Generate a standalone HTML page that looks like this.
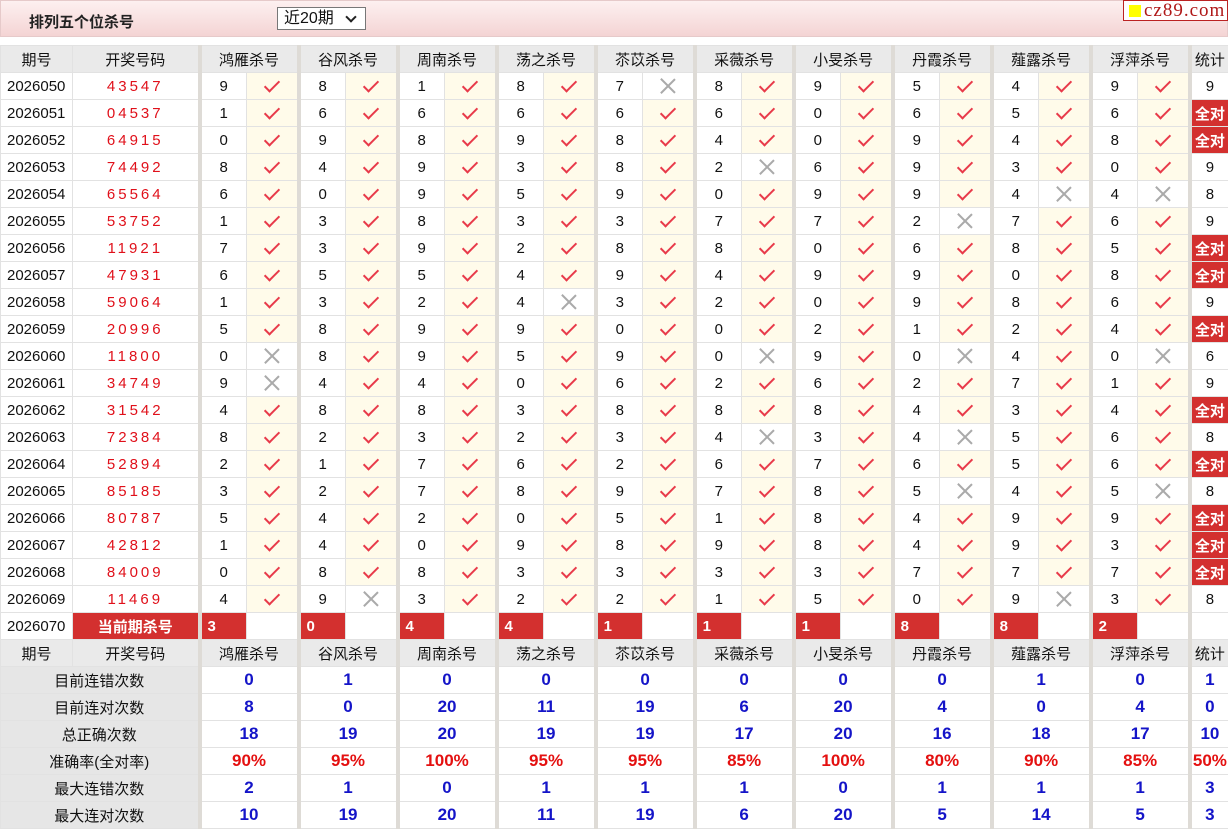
<!DOCTYPE html>
<html><head><meta charset="utf-8">
<style>
*{box-sizing:border-box;margin:0;padding:0}
body{width:1228px;height:828px;overflow:hidden;background:#fff;font-family:"Liberation Sans","Noto Sans CJK SC",sans-serif;position:relative}
.top{position:absolute;left:0;top:0;width:1228px;height:37px;background:linear-gradient(#fdf0f0,#f4d4d4);border:1px solid #e6caca}
.top b{position:absolute;left:28px;top:10px;font-size:15px;color:#222}
.sel{position:absolute;left:277px;top:7px;width:89px;height:23px;border:1px solid #777;background:#fff;font-size:16px;padding-left:6px;line-height:21px;color:#111}
.sel:after{content:"";position:absolute;right:10px;top:5px;width:6px;height:6px;border-right:2px solid #222;border-bottom:2px solid #222;transform:rotate(45deg)}
.logo{position:absolute;left:1123px;top:0;width:105px;height:21px;border:1px solid #b22;background:#fff;font-family:"Liberation Serif",serif;font-size:19px;color:#b01818;line-height:19px;padding-left:20px;letter-spacing:1px}
.logo:before{content:"";position:absolute;left:5px;top:4px;width:12px;height:12px;background:#ff0}
table{position:absolute;left:0;top:45px;border-collapse:collapse;table-layout:fixed;width:1228px}
td{height:27px;border:1px solid #e2e2e2;text-align:center;font-size:15px;color:#111;padding:0;position:relative;white-space:nowrap;overflow:hidden}
td.p{text-align:left;padding-left:6px}
td.h{color:#e0101a;letter-spacing:3px}
td.n{border-left:4px solid #dedbd6;text-align:left;padding-left:18px}
td.k{background:#fffbea}
td.s{border-left:4px solid #dedbd6}
tr.hd td{background:#eaeaea}
i.c{display:inline-block;width:8px;height:15px;border-right:2px solid #e83a4a;border-bottom:2px solid #e83a4a;transform:rotate(45deg);margin-top:-5px;vertical-align:middle}
i.x{display:inline-block;width:18px;height:18px;position:relative;vertical-align:middle}
i.x:before,i.x:after{content:"";position:absolute;left:8px;top:-1px;width:1.5px;height:20px;background:#aaa;transform:rotate(45deg)}
i.x:after{transform:rotate(-45deg)}
.q{background:#d3302f !important;color:#fff !important;font-weight:bold}
td.r{color:#fff;font-weight:bold;background:#d3302f;text-align:left;padding-left:6px}
tr.cur td.n{padding-left:6px}
td.l{background:#e6e6e6}
td.b{color:#1414c8;font-weight:bold;font-size:17px}
td.e{color:#e41010;font-weight:bold;font-size:17px}
</style></head><body>
<div class="top"><b>排列五个位杀号</b></div>
<div class="sel">近20期</div>
<div class="logo">cz89.com</div>
<table>
<colgroup><col style="width:72px"><col style="width:127px">
<col style="width:47px"><col style="width:52px"><col style="width:47px"><col style="width:52px"><col style="width:47px"><col style="width:52px"><col style="width:47px"><col style="width:52px"><col style="width:47px"><col style="width:52px"><col style="width:47px"><col style="width:52px"><col style="width:47px"><col style="width:52px"><col style="width:47px"><col style="width:52px"><col style="width:47px"><col style="width:52px"><col style="width:47px"><col style="width:52px">
<col style="width:39px"></colgroup>
<tr class="hd"><td>期号</td><td>开奖号码</td><td colspan=2 class="s">鸿雁杀号</td><td colspan=2 class="s">谷风杀号</td><td colspan=2 class="s">周南杀号</td><td colspan=2 class="s">荡之杀号</td><td colspan=2 class="s">苶苡杀号</td><td colspan=2 class="s">采薇杀号</td><td colspan=2 class="s">小旻杀号</td><td colspan=2 class="s">丹霞杀号</td><td colspan=2 class="s">薤露杀号</td><td colspan=2 class="s">浮萍杀号</td><td class="s">统计</td></tr>
<tr><td class=p>2026050</td><td class=h>43547</td><td class=n>9</td><td class=k><i class=c></i></td><td class=n>8</td><td class=k><i class=c></i></td><td class=n>1</td><td class=k><i class=c></i></td><td class=n>8</td><td class=k><i class=c></i></td><td class=n>7</td><td><i class=x></i></td><td class=n>8</td><td class=k><i class=c></i></td><td class=n>9</td><td class=k><i class=c></i></td><td class=n>5</td><td class=k><i class=c></i></td><td class=n>4</td><td class=k><i class=c></i></td><td class=n>9</td><td class=k><i class=c></i></td><td class=s>9</td></tr>
<tr><td class=p>2026051</td><td class=h>04537</td><td class=n>1</td><td class=k><i class=c></i></td><td class=n>6</td><td class=k><i class=c></i></td><td class=n>6</td><td class=k><i class=c></i></td><td class=n>6</td><td class=k><i class=c></i></td><td class=n>6</td><td class=k><i class=c></i></td><td class=n>6</td><td class=k><i class=c></i></td><td class=n>0</td><td class=k><i class=c></i></td><td class=n>6</td><td class=k><i class=c></i></td><td class=n>5</td><td class=k><i class=c></i></td><td class=n>6</td><td class=k><i class=c></i></td><td class="s q">全对</td></tr>
<tr><td class=p>2026052</td><td class=h>64915</td><td class=n>0</td><td class=k><i class=c></i></td><td class=n>9</td><td class=k><i class=c></i></td><td class=n>8</td><td class=k><i class=c></i></td><td class=n>9</td><td class=k><i class=c></i></td><td class=n>8</td><td class=k><i class=c></i></td><td class=n>4</td><td class=k><i class=c></i></td><td class=n>0</td><td class=k><i class=c></i></td><td class=n>9</td><td class=k><i class=c></i></td><td class=n>4</td><td class=k><i class=c></i></td><td class=n>8</td><td class=k><i class=c></i></td><td class="s q">全对</td></tr>
<tr><td class=p>2026053</td><td class=h>74492</td><td class=n>8</td><td class=k><i class=c></i></td><td class=n>4</td><td class=k><i class=c></i></td><td class=n>9</td><td class=k><i class=c></i></td><td class=n>3</td><td class=k><i class=c></i></td><td class=n>8</td><td class=k><i class=c></i></td><td class=n>2</td><td><i class=x></i></td><td class=n>6</td><td class=k><i class=c></i></td><td class=n>9</td><td class=k><i class=c></i></td><td class=n>3</td><td class=k><i class=c></i></td><td class=n>0</td><td class=k><i class=c></i></td><td class=s>9</td></tr>
<tr><td class=p>2026054</td><td class=h>65564</td><td class=n>6</td><td class=k><i class=c></i></td><td class=n>0</td><td class=k><i class=c></i></td><td class=n>9</td><td class=k><i class=c></i></td><td class=n>5</td><td class=k><i class=c></i></td><td class=n>9</td><td class=k><i class=c></i></td><td class=n>0</td><td class=k><i class=c></i></td><td class=n>9</td><td class=k><i class=c></i></td><td class=n>9</td><td class=k><i class=c></i></td><td class=n>4</td><td><i class=x></i></td><td class=n>4</td><td><i class=x></i></td><td class=s>8</td></tr>
<tr><td class=p>2026055</td><td class=h>53752</td><td class=n>1</td><td class=k><i class=c></i></td><td class=n>3</td><td class=k><i class=c></i></td><td class=n>8</td><td class=k><i class=c></i></td><td class=n>3</td><td class=k><i class=c></i></td><td class=n>3</td><td class=k><i class=c></i></td><td class=n>7</td><td class=k><i class=c></i></td><td class=n>7</td><td class=k><i class=c></i></td><td class=n>2</td><td><i class=x></i></td><td class=n>7</td><td class=k><i class=c></i></td><td class=n>6</td><td class=k><i class=c></i></td><td class=s>9</td></tr>
<tr><td class=p>2026056</td><td class=h>11921</td><td class=n>7</td><td class=k><i class=c></i></td><td class=n>3</td><td class=k><i class=c></i></td><td class=n>9</td><td class=k><i class=c></i></td><td class=n>2</td><td class=k><i class=c></i></td><td class=n>8</td><td class=k><i class=c></i></td><td class=n>8</td><td class=k><i class=c></i></td><td class=n>0</td><td class=k><i class=c></i></td><td class=n>6</td><td class=k><i class=c></i></td><td class=n>8</td><td class=k><i class=c></i></td><td class=n>5</td><td class=k><i class=c></i></td><td class="s q">全对</td></tr>
<tr><td class=p>2026057</td><td class=h>47931</td><td class=n>6</td><td class=k><i class=c></i></td><td class=n>5</td><td class=k><i class=c></i></td><td class=n>5</td><td class=k><i class=c></i></td><td class=n>4</td><td class=k><i class=c></i></td><td class=n>9</td><td class=k><i class=c></i></td><td class=n>4</td><td class=k><i class=c></i></td><td class=n>9</td><td class=k><i class=c></i></td><td class=n>9</td><td class=k><i class=c></i></td><td class=n>0</td><td class=k><i class=c></i></td><td class=n>8</td><td class=k><i class=c></i></td><td class="s q">全对</td></tr>
<tr><td class=p>2026058</td><td class=h>59064</td><td class=n>1</td><td class=k><i class=c></i></td><td class=n>3</td><td class=k><i class=c></i></td><td class=n>2</td><td class=k><i class=c></i></td><td class=n>4</td><td><i class=x></i></td><td class=n>3</td><td class=k><i class=c></i></td><td class=n>2</td><td class=k><i class=c></i></td><td class=n>0</td><td class=k><i class=c></i></td><td class=n>9</td><td class=k><i class=c></i></td><td class=n>8</td><td class=k><i class=c></i></td><td class=n>6</td><td class=k><i class=c></i></td><td class=s>9</td></tr>
<tr><td class=p>2026059</td><td class=h>20996</td><td class=n>5</td><td class=k><i class=c></i></td><td class=n>8</td><td class=k><i class=c></i></td><td class=n>9</td><td class=k><i class=c></i></td><td class=n>9</td><td class=k><i class=c></i></td><td class=n>0</td><td class=k><i class=c></i></td><td class=n>0</td><td class=k><i class=c></i></td><td class=n>2</td><td class=k><i class=c></i></td><td class=n>1</td><td class=k><i class=c></i></td><td class=n>2</td><td class=k><i class=c></i></td><td class=n>4</td><td class=k><i class=c></i></td><td class="s q">全对</td></tr>
<tr><td class=p>2026060</td><td class=h>11800</td><td class=n>0</td><td><i class=x></i></td><td class=n>8</td><td class=k><i class=c></i></td><td class=n>9</td><td class=k><i class=c></i></td><td class=n>5</td><td class=k><i class=c></i></td><td class=n>9</td><td class=k><i class=c></i></td><td class=n>0</td><td><i class=x></i></td><td class=n>9</td><td class=k><i class=c></i></td><td class=n>0</td><td><i class=x></i></td><td class=n>4</td><td class=k><i class=c></i></td><td class=n>0</td><td><i class=x></i></td><td class=s>6</td></tr>
<tr><td class=p>2026061</td><td class=h>34749</td><td class=n>9</td><td><i class=x></i></td><td class=n>4</td><td class=k><i class=c></i></td><td class=n>4</td><td class=k><i class=c></i></td><td class=n>0</td><td class=k><i class=c></i></td><td class=n>6</td><td class=k><i class=c></i></td><td class=n>2</td><td class=k><i class=c></i></td><td class=n>6</td><td class=k><i class=c></i></td><td class=n>2</td><td class=k><i class=c></i></td><td class=n>7</td><td class=k><i class=c></i></td><td class=n>1</td><td class=k><i class=c></i></td><td class=s>9</td></tr>
<tr><td class=p>2026062</td><td class=h>31542</td><td class=n>4</td><td class=k><i class=c></i></td><td class=n>8</td><td class=k><i class=c></i></td><td class=n>8</td><td class=k><i class=c></i></td><td class=n>3</td><td class=k><i class=c></i></td><td class=n>8</td><td class=k><i class=c></i></td><td class=n>8</td><td class=k><i class=c></i></td><td class=n>8</td><td class=k><i class=c></i></td><td class=n>4</td><td class=k><i class=c></i></td><td class=n>3</td><td class=k><i class=c></i></td><td class=n>4</td><td class=k><i class=c></i></td><td class="s q">全对</td></tr>
<tr><td class=p>2026063</td><td class=h>72384</td><td class=n>8</td><td class=k><i class=c></i></td><td class=n>2</td><td class=k><i class=c></i></td><td class=n>3</td><td class=k><i class=c></i></td><td class=n>2</td><td class=k><i class=c></i></td><td class=n>3</td><td class=k><i class=c></i></td><td class=n>4</td><td><i class=x></i></td><td class=n>3</td><td class=k><i class=c></i></td><td class=n>4</td><td><i class=x></i></td><td class=n>5</td><td class=k><i class=c></i></td><td class=n>6</td><td class=k><i class=c></i></td><td class=s>8</td></tr>
<tr><td class=p>2026064</td><td class=h>52894</td><td class=n>2</td><td class=k><i class=c></i></td><td class=n>1</td><td class=k><i class=c></i></td><td class=n>7</td><td class=k><i class=c></i></td><td class=n>6</td><td class=k><i class=c></i></td><td class=n>2</td><td class=k><i class=c></i></td><td class=n>6</td><td class=k><i class=c></i></td><td class=n>7</td><td class=k><i class=c></i></td><td class=n>6</td><td class=k><i class=c></i></td><td class=n>5</td><td class=k><i class=c></i></td><td class=n>6</td><td class=k><i class=c></i></td><td class="s q">全对</td></tr>
<tr><td class=p>2026065</td><td class=h>85185</td><td class=n>3</td><td class=k><i class=c></i></td><td class=n>2</td><td class=k><i class=c></i></td><td class=n>7</td><td class=k><i class=c></i></td><td class=n>8</td><td class=k><i class=c></i></td><td class=n>9</td><td class=k><i class=c></i></td><td class=n>7</td><td class=k><i class=c></i></td><td class=n>8</td><td class=k><i class=c></i></td><td class=n>5</td><td><i class=x></i></td><td class=n>4</td><td class=k><i class=c></i></td><td class=n>5</td><td><i class=x></i></td><td class=s>8</td></tr>
<tr><td class=p>2026066</td><td class=h>80787</td><td class=n>5</td><td class=k><i class=c></i></td><td class=n>4</td><td class=k><i class=c></i></td><td class=n>2</td><td class=k><i class=c></i></td><td class=n>0</td><td class=k><i class=c></i></td><td class=n>5</td><td class=k><i class=c></i></td><td class=n>1</td><td class=k><i class=c></i></td><td class=n>8</td><td class=k><i class=c></i></td><td class=n>4</td><td class=k><i class=c></i></td><td class=n>9</td><td class=k><i class=c></i></td><td class=n>9</td><td class=k><i class=c></i></td><td class="s q">全对</td></tr>
<tr><td class=p>2026067</td><td class=h>42812</td><td class=n>1</td><td class=k><i class=c></i></td><td class=n>4</td><td class=k><i class=c></i></td><td class=n>0</td><td class=k><i class=c></i></td><td class=n>9</td><td class=k><i class=c></i></td><td class=n>8</td><td class=k><i class=c></i></td><td class=n>9</td><td class=k><i class=c></i></td><td class=n>8</td><td class=k><i class=c></i></td><td class=n>4</td><td class=k><i class=c></i></td><td class=n>9</td><td class=k><i class=c></i></td><td class=n>3</td><td class=k><i class=c></i></td><td class="s q">全对</td></tr>
<tr><td class=p>2026068</td><td class=h>84009</td><td class=n>0</td><td class=k><i class=c></i></td><td class=n>8</td><td class=k><i class=c></i></td><td class=n>8</td><td class=k><i class=c></i></td><td class=n>3</td><td class=k><i class=c></i></td><td class=n>3</td><td class=k><i class=c></i></td><td class=n>3</td><td class=k><i class=c></i></td><td class=n>3</td><td class=k><i class=c></i></td><td class=n>7</td><td class=k><i class=c></i></td><td class=n>7</td><td class=k><i class=c></i></td><td class=n>7</td><td class=k><i class=c></i></td><td class="s q">全对</td></tr>
<tr><td class=p>2026069</td><td class=h>11469</td><td class=n>4</td><td class=k><i class=c></i></td><td class=n>9</td><td><i class=x></i></td><td class=n>3</td><td class=k><i class=c></i></td><td class=n>2</td><td class=k><i class=c></i></td><td class=n>2</td><td class=k><i class=c></i></td><td class=n>1</td><td class=k><i class=c></i></td><td class=n>5</td><td class=k><i class=c></i></td><td class=n>0</td><td class=k><i class=c></i></td><td class=n>9</td><td><i class=x></i></td><td class=n>3</td><td class=k><i class=c></i></td><td class=s>8</td></tr>
<tr class="cur"><td class=p>2026070</td><td class="q">当前期杀号</td><td class="n r">3</td><td></td><td class="n r">0</td><td></td><td class="n r">4</td><td></td><td class="n r">4</td><td></td><td class="n r">1</td><td></td><td class="n r">1</td><td></td><td class="n r">1</td><td></td><td class="n r">8</td><td></td><td class="n r">8</td><td></td><td class="n r">2</td><td></td><td class=s></td></tr>
<tr class="hd"><td>期号</td><td>开奖号码</td><td colspan=2 class="s">鸿雁杀号</td><td colspan=2 class="s">谷风杀号</td><td colspan=2 class="s">周南杀号</td><td colspan=2 class="s">荡之杀号</td><td colspan=2 class="s">苶苡杀号</td><td colspan=2 class="s">采薇杀号</td><td colspan=2 class="s">小旻杀号</td><td colspan=2 class="s">丹霞杀号</td><td colspan=2 class="s">薤露杀号</td><td colspan=2 class="s">浮萍杀号</td><td class="s">统计</td></tr>
<tr><td colspan=2 class=l>目前连错次数</td><td colspan=2 class="s b">0</td><td colspan=2 class="s b">1</td><td colspan=2 class="s b">0</td><td colspan=2 class="s b">0</td><td colspan=2 class="s b">0</td><td colspan=2 class="s b">0</td><td colspan=2 class="s b">0</td><td colspan=2 class="s b">0</td><td colspan=2 class="s b">1</td><td colspan=2 class="s b">0</td><td class="s b">1</td></tr>
<tr><td colspan=2 class=l>目前连对次数</td><td colspan=2 class="s b">8</td><td colspan=2 class="s b">0</td><td colspan=2 class="s b">20</td><td colspan=2 class="s b">11</td><td colspan=2 class="s b">19</td><td colspan=2 class="s b">6</td><td colspan=2 class="s b">20</td><td colspan=2 class="s b">4</td><td colspan=2 class="s b">0</td><td colspan=2 class="s b">4</td><td class="s b">0</td></tr>
<tr><td colspan=2 class=l>总正确次数</td><td colspan=2 class="s b">18</td><td colspan=2 class="s b">19</td><td colspan=2 class="s b">20</td><td colspan=2 class="s b">19</td><td colspan=2 class="s b">19</td><td colspan=2 class="s b">17</td><td colspan=2 class="s b">20</td><td colspan=2 class="s b">16</td><td colspan=2 class="s b">18</td><td colspan=2 class="s b">17</td><td class="s b">10</td></tr>
<tr><td colspan=2 class=l>准确率(全对率)</td><td colspan=2 class="s e">90%</td><td colspan=2 class="s e">95%</td><td colspan=2 class="s e">100%</td><td colspan=2 class="s e">95%</td><td colspan=2 class="s e">95%</td><td colspan=2 class="s e">85%</td><td colspan=2 class="s e">100%</td><td colspan=2 class="s e">80%</td><td colspan=2 class="s e">90%</td><td colspan=2 class="s e">85%</td><td class="s e">50%</td></tr>
<tr><td colspan=2 class=l>最大连错次数</td><td colspan=2 class="s b">2</td><td colspan=2 class="s b">1</td><td colspan=2 class="s b">0</td><td colspan=2 class="s b">1</td><td colspan=2 class="s b">1</td><td colspan=2 class="s b">1</td><td colspan=2 class="s b">0</td><td colspan=2 class="s b">1</td><td colspan=2 class="s b">1</td><td colspan=2 class="s b">1</td><td class="s b">3</td></tr>
<tr><td colspan=2 class=l>最大连对次数</td><td colspan=2 class="s b">10</td><td colspan=2 class="s b">19</td><td colspan=2 class="s b">20</td><td colspan=2 class="s b">11</td><td colspan=2 class="s b">19</td><td colspan=2 class="s b">6</td><td colspan=2 class="s b">20</td><td colspan=2 class="s b">5</td><td colspan=2 class="s b">14</td><td colspan=2 class="s b">5</td><td class="s b">3</td></tr>
</table>
</body></html>
